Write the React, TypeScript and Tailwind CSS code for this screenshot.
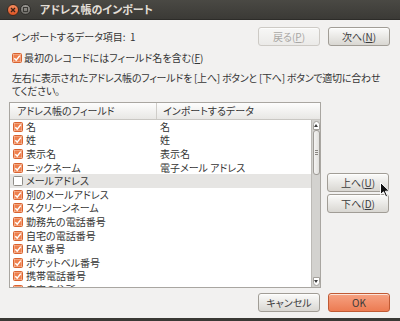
import React from "react";

const font = "[font-family:'Noto_Sans_CJK_JP','Noto_Sans',sans-serif] [font-feature-settings:'palt']";

function Check({ checked = true }: { checked?: boolean }) {
  if (!checked)
    return (
      <svg width="10" height="10" viewBox="0 0 10 10" className="shrink-0">
        <rect x="0.5" y="0.5" width="9" height="9" rx="1" fill="#ffffff" stroke="#8f8c87" />
      </svg>
    );
  return (
    <svg width="10" height="10" viewBox="0 0 10 10" className="shrink-0">
      <rect x="0.5" y="0.5" width="9" height="9" rx="1" fill="#f7c8ae" stroke="#d9622f" />
      <rect x="1.5" y="1.5" width="7" height="7" fill="#ef7f4c" />
      <path d="M2.3 5.2 L4.2 7.1 L7.8 2.6" fill="none" stroke="#ffffff" strokeWidth="1.5" />
    </svg>
  );
}

function Btn({
  children,
  kind = "normal",
}: {
  children: React.ReactNode;
  kind?: "normal" | "disabled" | "ok";
}) {
  const cls =
    kind === "ok"
      ? "border-[#c05a34] bg-gradient-to-b from-[#f6a282] to-[#ec7b52] text-[#3a3a3a]"
      : kind === "disabled"
      ? "border-[#cdcac5] bg-gradient-to-b from-[#f7f7f6] to-[#ebeae8] text-[#a9a7a4]"
      : "border-[#a19d96] bg-gradient-to-b from-[#fbfbfa] to-[#d9d7d2] text-[#3c3c3c]";
  return (
    <div
      className={`w-[62px] h-[19px] shrink-0 flex items-center justify-center rounded-[3px] border text-[10px] leading-none shadow-[inset_0_1px_0_rgba(255,255,255,0.7)] ${cls}`}
    >
      {children}
    </div>
  );
}

const rows: { a: string; b: string; c: boolean; hl?: boolean }[] = [
  { a: "名", b: "名", c: true },
  { a: "姓", b: "姓", c: true },
  { a: "表示名", b: "表示名", c: true },
  { a: "ニックネーム", b: "電子メール アドレス", c: true },
  { a: "メールアドレス", b: "", c: false, hl: true },
  { a: "別のメールアドレス", b: "", c: true },
  { a: "スクリーンネーム", b: "", c: true },
  { a: "勤務先の電話番号", b: "", c: true },
  { a: "自宅の電話番号", b: "", c: true },
  { a: "FAX 番号", b: "", c: true },
  { a: "ポケットベル番号", b: "", c: true },
  { a: "携帯電話番号", b: "", c: true },
  { a: "自宅の住所", b: "", c: true },
];

export default function App() {
  return (
    <div className={`w-[400px] h-[321px] overflow-hidden bg-[#f2f1f0] text-[#353535] flex flex-col ${font}`}>
      {/* title bar */}
      <div className="h-[20px] shrink-0 bg-gradient-to-b from-[#4a4944] to-[#3b3a36] flex items-center border-b border-[#2d2c29]">
        <div className="ml-[7px] w-[12px] h-[12px] rounded-full bg-gradient-to-b from-[#f68d5f] to-[#dd5221] border border-[#3a2a20] flex items-center justify-center">
          <svg width="6" height="6" viewBox="0 0 6 6">
            <path d="M1 1 L5 5 M5 1 L1 5" stroke="#3b2218" strokeWidth="1.3" />
          </svg>
        </div>
        <div className="ml-[1px] w-[11px] h-[11px] rounded-full bg-gradient-to-b from-[#9b9994] to-[#6c6a65] border border-[#2f2e2b] flex items-center justify-center">
          <div className="w-[5px] h-[5px] border border-[#3a3935]" />
        </div>
        <div className="ml-[9px] text-[11px] font-bold text-[#e2ded6] leading-none">アドレス帳のインポート</div>
      </div>

      {/* content */}
      <div className="flex-1 min-h-0 flex flex-col pl-[9px] pr-[10px]">
        <div className="mt-[7px] h-[19px] shrink-0 flex items-center">
          <div className="ml-[3px] text-[10px] leading-none flex-1">インポートするデータ項目:&nbsp;&nbsp;1</div>
          <Btn kind="disabled">
            戻る(<u>P</u>)
          </Btn>
          <div className="w-[8px]" />
          <Btn>
            次へ(<u>N</u>)
          </Btn>
        </div>

        <div className="mt-[5px] h-[14px] shrink-0 flex items-center ml-[3px]">
          <Check />
          <div className="ml-[2px] text-[10px] leading-none">
            最初のレコードにはフィールド名を含む(<u>F</u>)
          </div>
        </div>

        <div className="mt-[6px] ml-[3px] h-[26px] shrink-0 text-[10px] leading-[13px] whitespace-nowrap tracking-[-0.25px]">
          <div>左右に表示されたアドレス帳のフィールドを [上へ] ボタンと [下へ] ボタンで適切に合わせ</div>
          <div>てください。</div>
        </div>

        <div className="mt-[5px] flex shrink-0">
          {/* list */}
          <div className="w-[312px] h-[186px] border border-[#a9a6a1] bg-white flex flex-col">
            <div className="h-[17px] shrink-0 flex bg-gradient-to-b from-[#fdfdfd] to-[#e8e7e5] border-b border-[#c9c7c3] text-[10px] leading-none">
              <div className="w-[147px] flex items-center pl-[7px] border-r border-[#cfcdc9]">アドレス帳のフィールド</div>
              <div className="flex items-center pl-[6px]">インポートするデータ</div>
            </div>
            <div className="flex-1 min-h-0 flex overflow-hidden">
              <div className="flex-1 flex flex-col overflow-hidden">
                {rows.map((r, i) => (
                  <div
                    key={i}
                    className={`h-[13.6px] shrink-0 flex items-center text-[10px] leading-none ${r.hl ? "bg-[#e6e5e3]" : ""}`}
                  >
                    <div className="w-[150px] flex items-center pl-[3px]">
                      <Check checked={r.c} />
                      <span className="ml-[3px]">{r.a}</span>
                    </div>
                    <span>{r.b}</span>
                  </div>
                ))}
              </div>
              {/* scrollbar */}
              <div className="w-[9px] flex flex-col bg-[#d3d2cf] border-l border-[#bcbab6]">
                <div className="h-[9px] mt-[1px] mx-[0.5px] rounded-t-[4px] bg-white border border-[#a4a19c] flex items-center justify-center">
                  <svg width="4" height="3" viewBox="0 0 4 3">
                    <path d="M0 3 L2 0 L4 3 Z" fill="#3c3c3c" />
                  </svg>
                </div>
                <div className="h-[45px] mx-[0.5px] rounded-[3px] bg-gradient-to-r from-[#f4f3f2] to-[#e2e1de] border border-[#9f9c97] flex flex-col items-center justify-center gap-[1px]">
                  <div className="w-[3px] h-[1px] bg-[#8a8782]" />
                  <div className="w-[3px] h-[1px] bg-[#8a8782]" />
                  <div className="w-[3px] h-[1px] bg-[#8a8782]" />
                </div>
                <div className="flex-1" />
                <div className="h-[9px] mb-[1px] mx-[0.5px] rounded-b-[4px] bg-white border border-[#a4a19c] flex items-center justify-center">
                  <svg width="4" height="3" viewBox="0 0 4 3">
                    <path d="M0 0 L4 0 L2 3 Z" fill="#3c3c3c" />
                  </svg>
                </div>
              </div>
            </div>
          </div>

          <div className="ml-[6px] flex flex-col pt-[71px] gap-[2px] relative">
            <Btn>
              上へ(<u>U</u>)
            </Btn>
            <Btn>
              下へ(<u>D</u>)
            </Btn>
            <svg
              className="absolute left-[53px] top-[80px]"
              width="11"
              height="16"
              viewBox="0 0 11 16"
            >
              <path d="M0.5 0.5 L0.5 12.5 L3.5 9.8 L5.8 15 L7.6 14.2 L5.4 9.2 L9.5 9.2 Z" fill="#111" stroke="#fff" strokeWidth="1" />
            </svg>
          </div>
        </div>

        <div className="mt-[5px] flex justify-end gap-[8px] shrink-0">
          <Btn>キャンセル</Btn>
          <Btn kind="ok">OK</Btn>
        </div>
      </div>
      <div className="h-[3px] shrink-0 bg-[#3a3935]" />
    </div>
  );
}
